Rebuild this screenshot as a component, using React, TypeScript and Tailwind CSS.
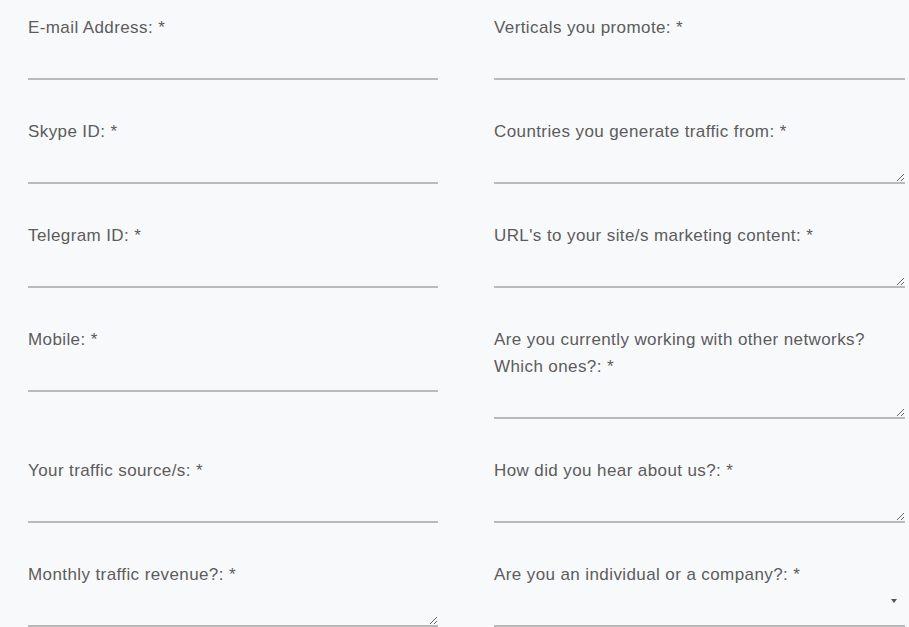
import React from 'react';

type Field = {
  label: string;
  kind: 'input' | 'textarea' | 'select';
};

// rows are pairs: [left, right]
const rows: [Field, Field][] = [
  [
    { label: 'E-mail Address: *', kind: 'input' },
    { label: 'Verticals you promote: *', kind: 'input' },
  ],
  [
    { label: 'Skype ID: *', kind: 'input' },
    { label: 'Countries you generate traffic from: *', kind: 'textarea' },
  ],
  [
    { label: 'Telegram ID: *', kind: 'input' },
    { label: "URL's to your site/s marketing content: *", kind: 'textarea' },
  ],
  [
    { label: 'Mobile: *', kind: 'input' },
    { label: 'Are you currently working with other networks? Which ones?: *', kind: 'textarea' },
  ],
  [
    { label: 'Your traffic source/s: *', kind: 'input' },
    { label: 'How did you hear about us?: *', kind: 'textarea' },
  ],
  [
    { label: 'Monthly traffic revenue?: *', kind: 'textarea' },
    { label: 'Are you an individual or a company?: *', kind: 'select' },
  ],
];

const controlBase =
  'block w-full h-[39px] bg-transparent border-0 border-b-2 border-[#bababa] outline-none text-[15px] text-[#444]';

function FormField({ field }: { field: Field }) {
  return (
    <div className="mb-[38px]">
      <label className="block text-[17px] leading-[27px] tracking-[0.4px] text-[#5c5c5c]">{field.label}</label>
      {field.kind === 'input' && <input type="text" className={controlBase} />}
      {field.kind === 'textarea' && (
        <textarea rows={1} className={`${controlBase} resize-y pt-2`} />
      )}
      {field.kind === 'select' && (
        <div className="relative">
          <select className={`${controlBase} appearance-none`} defaultValue="">
            <option value=""></option>
            <option value="individual">Individual</option>
            <option value="company">Company</option>
          </select>
          <span className="pointer-events-none absolute right-[8px] top-[11px] w-0 h-0 border-l-[3px] border-r-[3px] border-t-[4px] border-l-transparent border-r-transparent border-t-[#555]" />
        </div>
      )}
    </div>
  );
}

export default function App() {
  return (
    <div
      className="h-screen bg-[#f8f9fb] pt-[14px] pl-[28px] overflow-hidden"
      style={{ fontFamily: '"Liberation Sans", Arial, sans-serif' }}
    >
      <div className="grid grid-cols-[410px_411px] gap-x-[56px] items-start">
        {rows.map(([l, r]) => (
          <React.Fragment key={l.label}>
            <FormField field={l} />
            <FormField field={r} />
          </React.Fragment>
        ))}
      </div>
    </div>
  );
}
